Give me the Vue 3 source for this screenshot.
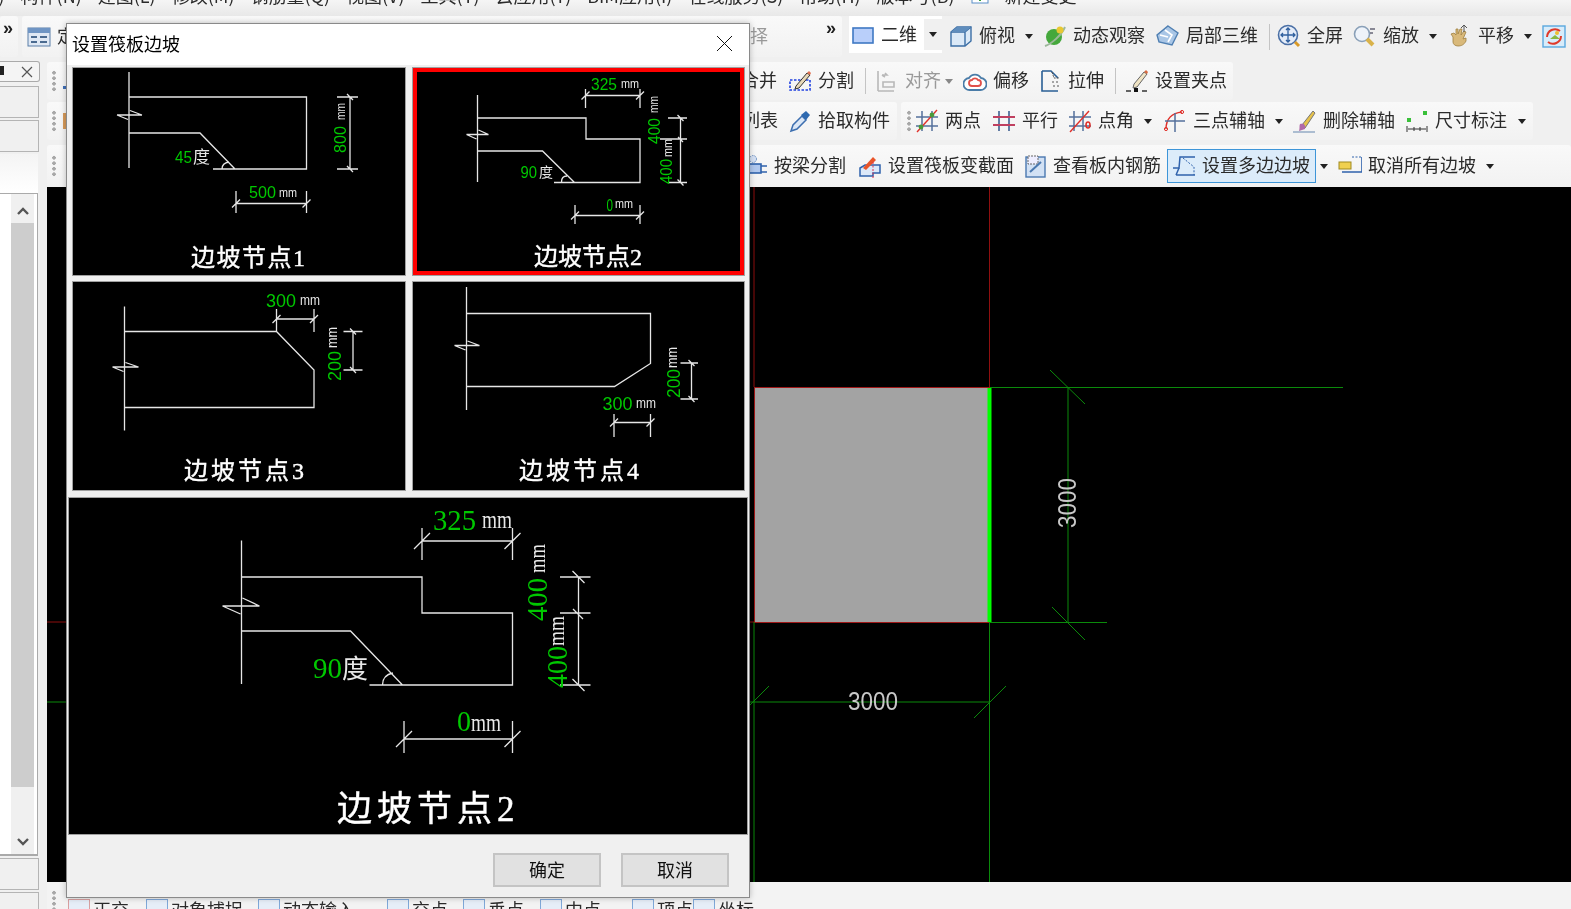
<template>
  <div class="app">
    <div class="menu">
      <div class="menu-inner">
        <span v-for="m in menus" :key="m" class="menu-item">{{ m }}</span>
        <svg class="menu-icon" viewBox="0 0 18 18" width="18" height="18">
          <rect x="1" y="1" width="16" height="15" fill="#fff" stroke="#5a8fc8" />
          <path d="M9 4v6M5 9l4 5 4-5z" fill="#3ab53a" stroke="#2c9a2c" />
        </svg>
        <span class="menu-item">新建变更</span>
      </div>
    </div>

    <div class="row row-top">
      <div class="panel panel-more"><span class="more">»</span></div>
      <div class="panel panel-select">
        <template v-for="t in topLeft" :key="t.id">
          <span v-if="t.more" class="more" :style="{ marginLeft: t.ml + 'px' }">»</span>
          <div v-else class="tool" :class="{ ghost: t.ghost }" :style="{ marginLeft: t.ml + 'px' }">
            <svg v-if="t.icon" class="icon" viewBox="0 0 24 24" v-html="icons[t.icon]"></svg>
            <span v-if="t.label">{{ t.label }}</span>
          </div>
        </template>
      </div>
      <div class="view-group">
        <div class="tool">
          <svg class="icon" viewBox="0 0 24 24" v-html="icons.plane"></svg>
          <span>二维</span>
        </div>
        <div class="view-caret"><i class="caret"></i></div>
      </div>
      <template v-for="t in topRight" :key="t.id">
        <i v-if="t.sep" class="sep" :style="{ marginLeft: t.ml + 'px' }"></i>
        <i v-else-if="t.caret" class="caret" :style="{ marginLeft: t.ml + 'px' }"></i>
        <div v-else class="tool" :style="{ marginLeft: t.ml + 'px' }">
          <svg class="icon" viewBox="0 0 24 24" v-html="icons[t.icon]"></svg>
          <span v-if="t.label">{{ t.label }}</span>
        </div>
      </template>
    </div>

    <div class="work">
      <aside class="side">
        <div class="side-tab">
          <span class="pin"></span>
          <svg viewBox="0 0 12 12" width="12" height="12"><path d="M1 1l10 10M11 1L1 11" stroke="#555" stroke-width="1.2" /></svg>
        </div>
        <div class="side-row"></div>
        <div class="side-row"></div>
        <div class="side-blank"></div>
        <div class="side-list">
          <div class="scrollbar">
            <svg viewBox="0 0 14 10" width="14" height="10"><path d="M2 8l5-5 5 5" fill="none" stroke="#555" stroke-width="2.4" /></svg>
            <div class="thumb"></div>
            <svg viewBox="0 0 14 10" width="14" height="10"><path d="M2 2l5 5 5-5" fill="none" stroke="#555" stroke-width="2.4" /></svg>
          </div>
        </div>
        <div class="side-row side-row-low"></div>
        <div class="side-row side-row-low"></div>
      </aside>

      <main class="main">
        <div v-for="r in rows" :key="r.id" class="row" :class="r.cls">
          <div v-for="p in r.panels" :key="p.id" class="panel" :class="p.cls">
            <span class="grip"></span>
            <template v-for="t in p.items" :key="t.id">
              <i v-if="t.sep" class="sep" :style="{ marginLeft: t.ml + 'px' }"></i>
              <i v-else-if="t.caret" class="caret" :class="{ small: t.small }" :style="{ marginLeft: t.ml + 'px' }"></i>
              <div v-else class="tool" :class="{ ghost: t.ghost, active: t.active }" :style="{ marginLeft: t.ml + 'px' }">
                <svg class="icon" viewBox="0 0 24 24" v-html="icons[t.icon]"></svg>
                <span>{{ t.label }}</span>
              </div>
            </template>
          </div>
        </div>

        <svg class="canvas" viewBox="47 187 1524 695">
          <rect x="754.5" y="387.5" width="235" height="235" fill="#a3a3a3" stroke="#a01818" />
          <path d="M754 187V387M989.5 187V387M47 622H754" stroke="#8f0f0f" fill="none" />
          <path d="M990 387.5H1343M990 622.5H1107M1068 387.5V622.5M1050 370L1085 404M1052 607L1085 640M989.5 622V882M754 622V882M47 702H989.5M769 686L750 705M1006 686L974 718" stroke="#0b8a0b" fill="none" />
          <path d="M989.5 388V622" stroke="#00ff00" stroke-width="4" />
          <text class="dim" x="848" y="710" font-size="25" textLength="50" lengthAdjust="spacingAndGlyphs">3000</text>
          <text class="dim" x="1076" y="528" font-size="25" textLength="50" lengthAdjust="spacingAndGlyphs" transform="rotate(-90 1076 528)">3000</text>
        </svg>

        <div class="status">
          <span class="grip grip-status"></span>
          <div v-for="s in statusItems" :key="s.label" class="status-item" :class="s.cls">
            <i class="status-icon"></i>
            <span>{{ s.label }}</span>
          </div>
        </div>
      </main>
    </div>

    <div class="dialog">
      <div class="dialog-title">
        <span>设置筏板边坡</span>
        <svg viewBox="0 0 15 15" width="15" height="15"><path d="M0 0l15 15M15 0L0 15" stroke="#111" stroke-width="1" /></svg>
      </div>
      <div class="node-grid">
        <div v-for="n in nodes" :key="n.id" class="node" :class="{ selected: n.selected }">
          <svg :viewBox="n.view">
            <path :d="n.d" class="drawing" />
            <text
              v-for="(t, i) in n.texts"
              :key="i"
              :class="t.c"
              :x="t.x"
              :y="t.y"
              :font-size="t.s"
              :textLength="t.len"
              :lengthAdjust="t.len ? 'spacingAndGlyphs' : undefined"
              :transform="t.rot ? `rotate(-90 ${t.x} ${t.y})` : undefined"
            >{{ t.v }}</text>
          </svg>
        </div>
      </div>
      <div class="preview">
        <svg :viewBox="preview.view">
          <path :d="preview.d" class="drawing" />
          <text
            v-for="(t, i) in preview.texts"
            :key="i"
            :class="[t.c, 'serif']"
            :x="t.x"
            :y="t.y"
            :font-size="t.s"
            :textLength="t.len"
            :lengthAdjust="t.len ? 'spacingAndGlyphs' : undefined"
            :transform="t.rot ? `rotate(-90 ${t.x} ${t.y})` : undefined"
          >{{ t.v }}</text>
        </svg>
      </div>
      <div class="dialog-foot">
        <button class="btn">确定</button>
        <button class="btn">取消</button>
      </div>
    </div>
  </div>
</template>

<script setup>
const menus = ['工程(P)', '构件(N)', '建图(L)', '修改(M)', '钢筋量(Q)', '视图(V)', '工具(T)', '云应用(Y)', 'BIM应用(I)', '在线服务(S)', '帮助(H)', '版本号(B)']

const icons = {
  form: '<rect x="1" y="3" width="22" height="18" fill="#dfe8f4" stroke="#5a7fa8"/><rect x="1" y="3" width="22" height="5" fill="#6f95c4"/><path d="M4 12h6M13 12h7M4 17h6M13 17h7" stroke="#4a6a90" stroke-width="2"/>',
  plane: '<rect x="2" y="5" width="20" height="15" fill="#b9cffa" stroke="#3f78c4" stroke-width="1.6"/>',
  cube: '<path d="M2 8l6-5h14v14l-6 5H2z" fill="#dbe9f7" stroke="#3b6ea5" stroke-width="1.4"/><path d="M2 8h14v14M16 8l6-5" fill="none" stroke="#3b6ea5" stroke-width="1.4"/><path d="M2 8l6-5h14l-6 5z" fill="#5f8dbd"/>',
  orbit: '<ellipse cx="11" cy="13" rx="8" ry="8" fill="#45a83c"/><path d="M2 22C8 20 18 12 22 3" stroke="#9cb89a" stroke-width="2" fill="none"/><circle cx="17" cy="6" r="3.5" fill="#e8c832"/>',
  local3d: '<path d="M12 2l10 7-6 12-13-3-2-7z" fill="#a9c6e6" stroke="#4f7fb2" stroke-width="1.4"/><path d="M9 6l7 5-4 7M4 11l8 2" stroke="#fff" stroke-width="1.6" fill="none"/>',
  fit: '<circle cx="11" cy="11" r="9.5" fill="#e4ecf8" stroke="#4a6fa5" stroke-width="1.6"/><path d="M11 4v14M4 11h14M9 6l2-2 2 2M9 16l2 2 2-2M6 9l-2 2 2 2M16 9l2 2-2 2" stroke="#2f5f9e" stroke-width="1.3" fill="none"/><path d="M18 18l4 4" stroke="#d99a28" stroke-width="3"/>',
  zoom: '<circle cx="9" cy="10" r="7.5" fill="#eef3fa" stroke="#8aa0b8" stroke-width="1.6"/><path d="M14 15l6 6" stroke="#d9b24a" stroke-width="4"/><path d="M17 5h5M17 9h3" stroke="#667" stroke-width="1.4"/>',
  pan: '<path d="M5 13l-2-3 3-1 2 2V5h2v5l2-5h2l-1 6 3-4 2 1-3 7 3-1v3c-2 4-5 5-8 5s-5-2-5-4z" fill="#d9b97a" stroke="#a08040" stroke-width=".8"/><path d="M16 2v6M13 4l3-3 3 3" stroke="#555" fill="none"/>',
  cycle: '<rect x="1" y="2" width="22" height="21" fill="#d8ecfa" stroke="#5aa8de" stroke-width="1.4"/><path d="M5 13a8 8 0 0 1 13-6M19 12a8 8 0 0 1-13 6" stroke="#e03a2a" stroke-width="2" fill="none"/><path d="M8 15l5-4 5 4z" fill="#8ab840"/><circle cx="15" cy="9" r="2" fill="#eec030"/>',
  split: '<rect x="2" y="11" width="20" height="10" fill="none" stroke="#2040e0" stroke-width="1.6" stroke-dasharray="2.5 1.5"/><path d="M8 17L19 4l3 2-11 13-4 1z" fill="#e8d8b8" stroke="#333"/><path d="M19 4l3 2 1-2-2-2z" fill="#e07050"/>',
  align: '<path d="M3 2v20M3 22h16M7 6h5l-2-2M7 6l3 2M8 13h11v5H8z" stroke="#b8b8b8" stroke-width="1.6" fill="none"/>',
  offset: '<path d="M7 21a6 6 0 0 1-1-12 7 7 0 0 1 12 0 6 6 0 0 1-1 12z" fill="#fff" stroke="#4a7ca8" stroke-width="1.8"/><path d="M9 17a3 3 0 0 1 0-6 3.5 3.5 0 0 1 6 0 3 3 0 0 1 0 6z" fill="none" stroke="#e0504a" stroke-width="1.8"/>',
  stretch: '<path d="M4 2h9l7 7v0M4 2v20h16" fill="none" stroke="#2a5f95" stroke-width="1.6"/><path d="M14 3l2 6h5M14 13h2M18 13h2M15 17h2M19 17h2" stroke="#555" stroke-dasharray="2 1" fill="none"/>',
  gripEdit: '<path d="M9 15L19 3l3 2-10 13-4 1z" fill="#f0e4c4" stroke="#666"/><path d="M19 3l3 2 1-2-2-2z" fill="#d86a40"/><path d="M1 22h5M17 22h5" stroke="#333" stroke-width="1.5"/><rect x="9" y="19" width="4" height="4" fill="#111"/>',
  pick: '<path d="M3 22l2-6 9-9 4 4-9 9z" fill="#dbe7f6" stroke="#3d6fb0" stroke-width="1.5"/><path d="M13 6l5-4 4 4-4 5z" fill="#2f6ab0"/>',
  twoPoint: '<path d="M7 2v20M17 2v20M1 8h22M1 17h22" stroke="#54709c" stroke-width="1.5"/><path d="M2 23L22 1" stroke="#e0302a" stroke-width="1.4"/><circle cx="6" cy="18" r="2.4" fill="#4a9a3a"/><circle cx="17" cy="6" r="2.4" fill="#4a9a3a"/>',
  parallel: '<path d="M7 2v20M17 2v20" stroke="#54709c" stroke-width="1.8"/><path d="M1 8h22M1 16h22" stroke="#c04060" stroke-width="1.8"/>',
  angle: '<path d="M6 2v20M15 2v20M1 8h22M1 17h22" stroke="#54709c" stroke-width="1.5"/><path d="M2 23L21 2" stroke="#e0302a" stroke-width="1.4"/><ellipse cx="20" cy="16" rx="2" ry="3" fill="none" stroke="#e0302a" stroke-width="1.6"/>',
  threePoint: '<path d="M3 20C3 10 9 4 19 3" stroke="#e0302a" stroke-width="1.5" fill="none"/><path d="M12 4v19M2 12h20" stroke="#54709c" stroke-width="1.5"/><circle cx="3" cy="20" r="1.6" fill="none" stroke="#e0302a"/><circle cx="19" cy="3" r="1.6" fill="none" stroke="#e0302a"/>',
  erase: '<path d="M9 16L20 2l2 2-10 15z" fill="#e6c24a" stroke="#777"/><path d="M7 15c4-1 6 1 5 5l-6 2c1-3 0-5 1-7z" fill="#b06aa8"/><path d="M0 23h22" stroke="#9ab0c8" stroke-width="1.6"/>',
  dimension: '<rect x="2" y="9" width="4" height="4" fill="#3ac03a"/><rect x="18" y="2" width="4" height="4" fill="#3ac03a"/><path d="M2 17v6M22 17v6M3 20h18M9 18v4M15 18v4" stroke="#333" fill="none"/>',
  beam: '<rect x="2" y="10" width="15" height="9" fill="#b0c8ee" stroke="#2f62ac" stroke-width="1.6"/><path d="M17 12h6M17 18h6" stroke="#2f62ac" stroke-width="1.6"/><circle cx="9" cy="5" r="3.5" fill="#d6e2f5" stroke="#6a8fc0" stroke-dasharray="1.5 1"/>',
  section: '<path d="M2 22V14l5-3h15v8h-7v3z" fill="#dce8f8" stroke="#2f62ac" stroke-width="1.5"/><path d="M5 14L15 3l3 3L8 16z" fill="#e9552a"/><path d="M15 8v16" stroke="#e0304a" stroke-dasharray="2 1.5"/>',
  rebar: '<rect x="3" y="3" width="19" height="20" fill="#d2e1f4" stroke="#4a78b0" stroke-width="1.4"/><path d="M5 2h10v8H5z" fill="#eef" stroke="#666" stroke-dasharray="2 1"/><path d="M7 18L18 8" stroke="#4a78b0" stroke-width="2"/>',
  poly: '<path d="M1 14h6l1-11h15" fill="none" stroke="#2f62ac" stroke-width="1.5"/><path d="M4 21h19M7 14l-3 7" fill="none" stroke="#2f62ac" stroke-width="1.5"/><path d="M11 4l11 9v8" fill="none" stroke="#2f62ac" stroke-dasharray="2 1.5"/>',
  cancel: '<rect x="1" y="8" width="12" height="7" fill="#f0d050" stroke="#a08a20"/><path d="M4 18h20V3" fill="none" stroke="#2f62ac" stroke-width="1.6"/><path d="M14 3h9" stroke="#2f62ac" stroke-dasharray="2 1.5"/>',
  dot: '<rect x="1" y="17" width="4" height="3" fill="#3f6fb8"/>',
  orange: '<rect x="1" y="4" width="4" height="16" fill="#d69a5a"/>',
  blank: ''
}

const topLeft = [
  { id: 1, icon: 'form', label: '定义', ml: 0 },
  { id: 2, label: '选择', ghost: true, ml: 639 },
  { id: 3, more: true, ml: 58 }
]

const topRight = [
  { id: 1, icon: 'cube', label: '俯视', ml: 7 },
  { id: 2, caret: true, ml: 10 },
  { id: 3, icon: 'orbit', label: '动态观察', ml: 10 },
  { id: 4, icon: 'local3d', label: '局部三维', ml: 11 },
  { id: 5, sep: true, ml: 11 },
  { id: 6, icon: 'fit', label: '全屏', ml: 7 },
  { id: 7, icon: 'zoom', label: '缩放', ml: 10 },
  { id: 8, caret: true, ml: 10 },
  { id: 9, icon: 'pan', label: '平移', ml: 11 },
  { id: 10, caret: true, ml: 10 },
  { id: 11, icon: 'cycle', ml: 10 }
]

const rows = [
  {
    id: 'edit',
    cls: 'row-mid',
    panels: [{
      id: 1,
      cls: 'panel-a',
      items: [
        { id: 1, icon: 'dot', label: '选择', ml: 6 },
        { id: 2, icon: 'split', label: '合并', ml: 583 },
        { id: 3, icon: 'split', label: '分割', ml: 11 },
        { id: 4, sep: true, ml: 11 },
        { id: 5, icon: 'align', label: '对齐', ghost: true, ml: 9 },
        { id: 6, caret: true, small: true, ml: 4 },
        { id: 7, icon: 'offset', label: '偏移', ml: 10 },
        { id: 8, icon: 'stretch', label: '拉伸', ml: 9 },
        { id: 9, sep: true, ml: 11 },
        { id: 10, icon: 'gripEdit', label: '设置夹点', ml: 9 }
      ]
    }]
  },
  {
    id: 'axis',
    cls: 'row-mid',
    panels: [
      {
        id: 1,
        cls: 'panel-b',
        items: [
          { id: 1, icon: 'orange', label: '构件', ml: 6 },
          { id: 2, icon: 'form', label: '列表', ml: 584 },
          { id: 3, icon: 'pick', label: '拾取构件', ml: 10 }
        ]
      },
      {
        id: 2,
        cls: 'panel-c',
        items: [
          { id: 1, icon: 'twoPoint', label: '两点', ml: 4 },
          { id: 2, icon: 'parallel', label: '平行', ml: 11 },
          { id: 3, icon: 'angle', label: '点角', ml: 10 },
          { id: 4, caret: true, ml: 10 },
          { id: 5, icon: 'threePoint', label: '三点辅轴', ml: 11 },
          { id: 6, caret: true, ml: 10 },
          { id: 7, icon: 'erase', label: '删除辅轴', ml: 10 },
          { id: 8, icon: 'dimension', label: '尺寸标注', ml: 10 },
          { id: 9, caret: true, ml: 11 }
        ]
      }
    ]
  },
  {
    id: 'slab',
    cls: 'row-low',
    panels: [{
      id: 1,
      cls: 'panel-d',
      items: [
        { id: 1, icon: 'blank', label: '筏板', ml: 6 },
        { id: 2, icon: 'beam', label: '按梁分割', ml: 616 },
        { id: 3, icon: 'section', label: '设置筏板变截面', ml: 12 },
        { id: 4, icon: 'rebar', label: '查看板内钢筋', ml: 9 },
        { id: 5, icon: 'poly', label: '设置多边边坡', active: true, ml: 6 },
        { id: 6, caret: true, ml: 4 },
        { id: 7, icon: 'cancel', label: '取消所有边坡', ml: 10 },
        { id: 8, caret: true, ml: 10 }
      ]
    }]
  }
]

const statusItems = [
  { label: '正交', cls: 'st-ortho' },
  { label: '对象捕捉', cls: 'st-snap' },
  { label: '动态输入', cls: 'st-input' },
  { label: '交点', cls: 'st-cross' },
  { label: '垂点', cls: 'st-foot' },
  { label: '中点', cls: 'st-mid' },
  { label: '顶点', cls: 'st-top' },
  { label: '坐标', cls: 'st-coord' }
]

// dimension helpers, all numbers are screen px because each svg viewBox starts at its cell corner
function dimH(x1, x2, y, y1, y2, t = 4) {
  return `M${x1} ${y1}V${y2}M${x2} ${y1}V${y2}M${x1} ${y}H${x2}M${x1 - t} ${y + t}L${x1 + t} ${y - t}M${x2 - t} ${y + t}L${x2 + t} ${y - t}`
}

function dimV(y1, y2, x, x1, x2, t = 3) {
  return `M${x1} ${y1}H${x2}M${x1} ${y2}H${x2}M${x} ${y1}V${y2}M${x - t} ${y1 - t}L${x + t} ${y1 + t}M${x - t} ${y2 - t}L${x + t} ${y2 + t}`
}

function breakMark(x, y, l, r, h = 4.5) {
  return `M${x - l} ${y}H${x + r}M${x - l} ${y}L${x - 1} ${y + h}M${x + 1} ${y - h}L${x + r} ${y}`
}

const num = (v, x, y, len, rot = false, s = 17) => ({ v, x, y, len, rot, s, c: 'num' })
const unit = (v, x, y, len, rot = false, s = 12) => ({ v, x, y, len, rot, s, c: 'unit' })
const word = (v, x, y, s) => ({ v, x, y, s, c: 'word' })

const nodes = [
  {
    id: 1,
    view: '73 68 332 207',
    d: 'M129 72V168M129 97H306.5V169H213M129 133H200L235 169M222 169Q222 163 229 162' +
      breakMark(129, 115, 12, 13) + dimV(97, 169, 350, 337, 358) + dimH(236, 306.5, 203.5, 191, 213),
    texts: [
      num('45', 175, 163, 17), word('度', 193, 163, 17),
      num('500', 249, 198, 27), unit('mm', 279, 197, 18, false, 13),
      num('800', 346, 153, 27, true), unit('mm', 345, 120, 17, true),
      { v: '边坡节点1', x: 191, y: 266, s: 24, c: 'caption spaced' }
    ]
  },
  {
    id: 2,
    selected: true,
    view: '413 68 331 207',
    d: 'M477.5 95V182M478 118H586V139H640V182.5H554M478 151H542.5L574.5 182.5M561.5 182Q561.5 176 567 176' +
      breakMark(477.5, 134.5, 11, 11) + dimH(585.5, 640, 95.5, 89, 108) + dimV(118, 182.5, 680.5, 668, 687) +
      'M660 139H687M678 137L683 142' + dimH(575, 640, 215.5, 205, 224),
    texts: [
      num('90', 520.5, 178, 16.5), word('度', 539, 177, 14),
      num('325', 591, 90, 26), unit('mm', 621, 88, 18),
      num('400', 660, 144, 26, true), unit('mm', 658, 113, 17, true),
      num('400', 672, 184, 25, true), unit('mm', 672, 157, 18, true, 13),
      num('0', 606.5, 211, 6.5), unit('mm', 615, 208, 18),
      { v: '边坡节点2', x: 534, y: 265, s: 24, c: 'caption' }
    ]
  },
  {
    id: 3,
    view: '73 282 332 208',
    d: 'M124.5 306.5V430.5M125 331.5H276.5L314 370V407.5H125' +
      breakMark(124.5, 367, 12, 14) + dimH(276.5, 314, 319, 309, 332) + dimV(331.5, 370, 353, 343.5, 362.5),
    texts: [
      num('300', 266, 307, 30, false, 18), unit('mm', 300, 305, 20, false, 14),
      num('200', 341, 381, 30, true, 18), unit('mm', 337, 348, 21, true, 14),
      { v: '边坡节点3', x: 184, y: 479, s: 24, c: 'caption wide' }
    ]
  },
  {
    id: 4,
    view: '413 282 331 208',
    d: 'M466.5 287V410M467 313.5H650.5V363.5L614.5 386.5H467' +
      breakMark(466.5, 345.5, 12, 13) + dimH(614, 650.5, 422.5, 414, 437) + dimV(363, 399, 691.5, 680.5, 698),
    texts: [
      num('300', 602.5, 410, 30, false, 18), unit('mm', 636, 408, 20, false, 14),
      num('200', 680, 398, 29, true, 18), unit('mm', 677, 368, 21, true, 14),
      { v: '边坡节点4', x: 519, y: 479, s: 24, c: 'caption wide' }
    ]
  }
]

const preview = {
  view: '69 498 678 336',
  d: 'M241.5 540.5V684M242 577H422V613H512.5V685H369.5M242 631H350.5L402.5 685M382.5 685Q382.5 675 393 673' +
    breakMark(241.5, 606, 19, 18, 8) + dimH(422, 512.5, 541, 528, 560, 8) + dimV(577, 685, 578.5, 560, 590.5, 6) +
    'M560 613H590.5M573 609L583 619' + dimH(404, 512.5, 739, 721, 753, 8),
  texts: [
    num('325', 433, 530, 43, false, 29), unit('mm', 482, 528, 30, false, 25),
    num('400', 547, 621, 43, true, 30), unit('mm', 545, 573, 29, true, 24),
    num('400', 567, 688, 42, true, 30), unit('mm', 564, 646, 30, true, 24),
    num('90', 313, 678, 29, false, 30), word('度', 342, 678, 26),
    num('0', 457, 731, 14, false, 30), unit('mm', 471, 731, 30, false, 25),
    { v: '边坡节点2', x: 337, y: 821, s: 35, c: 'caption large' }
  ]
}
</script>

<style>
html, body { margin: 0; overflow: hidden; background: #f0f0f0; }
</style>

<style scoped>
.app {
  position: relative;
  width: 1571px;
  height: 909px;
  overflow: hidden;
  background: #f0f0f0;
  color: #2b2b2b;
  font: 18px/24px "Noto Sans CJK SC", "Liberation Sans", sans-serif;
  filter: blur(0.3px);
}

.menu {
  height: 16px;
  overflow: hidden;
  background: linear-gradient(#f5f5f5, #e8e8e8);
}
.menu-inner {
  display: flex;
  align-items: center;
  gap: 16px;
  margin: -17px 0 0 -55px;
  white-space: nowrap;
}
.menu-icon { flex: none; margin-top: 2px; }

.row {
  display: flex;
  align-items: center;
  white-space: nowrap;
}
.row-top { height: 45px; align-items: flex-start; background: #f0f0f0; }
.row-top > .tool, .row-top > .sep, .row-top > .caret { margin-top: 8px; }
.row-top > .caret { margin-top: 18px; }
.row-mid { height: 40px; }
.row-low { height: 46px; align-items: flex-end; }

.panel {
  display: flex;
  align-items: center;
  background: linear-gradient(#f9f9f9, #f2f2f2);
  border-radius: 3px;
}
.panel-more { width: 18px; height: 41px; margin-right: 4px; padding-left: 3px; box-sizing: border-box; }
.panel-select { width: 820px; height: 41px; padding-left: 5px; box-sizing: border-box; }
.panel-a { width: 1186px; height: 38px; padding-left: 5px; box-sizing: border-box; }
.panel-b { width: 850px; height: 38px; padding-left: 5px; box-sizing: border-box; }
.panel-c { width: 632px; height: 38px; margin-left: 4px; padding-left: 6px; box-sizing: border-box; }
.panel-d { width: 1524px; height: 42px; padding-left: 5px; box-sizing: border-box; }

.more {
  align-self: flex-start;
  margin-top: 3px;
  font: bold 18px/18px "Liberation Sans", sans-serif;
  color: #222;
}

.view-group {
  display: flex;
  align-items: center;
  width: 93px;
  height: 37px;
  margin-left: 7px;
  padding-left: 2px;
  box-sizing: border-box;
  background: #fff;
}
.view-caret {
  display: flex;
  align-items: center;
  justify-content: center;
  width: 18px;
  height: 31px;
  margin-left: 7px;
  background: #f0f0f0;
}

.tool {
  display: flex;
  flex: none;
  align-items: center;
  gap: 6px;
  height: 24px;
}
.tool span { margin-bottom: 4px; }
.tool.ghost { color: #999; }
.tool.active {
  height: 32px;
  padding: 0 5px 0 4px;
  border: 1px solid #3d95d8;
  background: #dcecfa;
}
.icon { flex: none; width: 24px; height: 24px; }

.caret {
  display: block;
  flex: none;
  width: 0;
  height: 0;
  border-top: 5px solid #222;
  border-left: 4px solid transparent;
  border-right: 4px solid transparent;
}
.caret.small { border-top-color: #888; }

.sep {
  display: block;
  flex: none;
  width: 1px;
  height: 26px;
  background: #c4c4c4;
}

.grip {
  flex: none;
  width: 4px;
  height: 22px;
  background: radial-gradient(circle, #a8a8a8 1.6px, transparent 2px) 0 0 / 4px 5.5px;
}

.work { display: flex; height: 848px; }

.side {
  flex: none;
  width: 47px;
  box-sizing: border-box;
  padding-top: 0;
}
.side-tab {
  display: flex;
  align-items: center;
  justify-content: flex-end;
  gap: 0;
  width: 40px;
  height: 21px;
  box-sizing: border-box;
  padding-right: 6px;
  border: 1px solid #aaa;
  border-left: 0;
  border-radius: 0 3px 3px 0;
  background: #f4f4f4;
  position: relative;
}
.pin {
  position: absolute;
  left: 0;
  top: 4px;
  width: 4px;
  height: 9px;
  background: #222;
}
.side-row {
  width: 39px;
  height: 32px;
  margin-top: 2px;
  box-sizing: border-box;
  border: 1px solid #b4b4b4;
  border-left: 0;
  background: #f0f0f0;
}
.side-row:nth-child(2) { margin-top: 4px; }
.side-blank {
  width: 38px;
  height: 39px;
  margin-top: 2px;
  background: linear-gradient(#f4f4f4, #fff);
}
.side-list {
  display: flex;
  justify-content: flex-end;
  width: 38px;
  height: 663px;
  box-sizing: border-box;
  padding-right: 3px;
  border: 1px solid #aaa;
  border-width: 1px 1px 2px 0;
  background: #fff;
}
.scrollbar {
  display: flex;
  flex-direction: column;
  align-items: center;
  gap: 0;
  width: 23px;
  height: 100%;
  padding-top: 12px;
  box-sizing: border-box;
  background: #f0f0f0;
}
.thumb {
  width: 100%;
  height: 564px;
  margin: 7px 0 50px;
  background: #cdcdcd;
}
.side-row-low { margin-top: 2px; }

.main { flex: none; width: 1524px; }

.canvas {
  display: block;
  width: 1524px;
  height: 695px;
  background: #000;
}
.dim {
  fill: #c8c8c8;
  font-family: "Liberation Sans", sans-serif;
}

.status {
  display: flex;
  align-items: flex-start;
  height: 27px;
  overflow: hidden;
  background: #f3f3f3;
}
.grip-status { margin: 8px 0 0 5px; }
.status-item {
  display: flex;
  flex: none;
  align-items: center;
  gap: 3px;
  margin-top: 15px;
  height: 24px;
}
.status-icon {
  display: block;
  width: 22px;
  height: 20px;
  box-sizing: border-box;
  border: 1px solid #7fa8d8;
  background: #e6eef8;
}
.st-ortho { margin-left: 12px; }
.st-ortho .status-icon { border-color: #d8a0a0; }
.st-snap { margin-left: 17px; }
.st-input { margin-left: 15px; }
.st-cross { margin-left: 32px; }
.st-foot { margin-left: 15px; }
.st-mid { margin-left: 16px; }
.st-top { margin-left: 31px; }
.st-coord { margin-left: 0; }

.dialog {
  position: absolute;
  left: 66px;
  top: 23px;
  width: 684px;
  height: 875px;
  box-sizing: border-box;
  border: 1px solid #8a8a8a;
  background: #f0f0f0;
  box-shadow: 0 0 6px rgba(0, 0, 0, 0.25);
  color: #000;
}
.dialog-title {
  display: flex;
  align-items: center;
  justify-content: space-between;
  height: 41px;
  padding: 0 17px 3px 5px;
  box-sizing: border-box;
  background: #fff;
}
.node-grid {
  display: grid;
  grid-template-columns: 334px 333px;
  grid-template-rows: 209px 210px;
  gap: 5px 6px;
  margin: 2px 0 0 5px;
}
.node {
  position: relative;
  box-sizing: border-box;
  border: 1px solid #a0a0a0;
  background: #000;
}
.node svg, .preview svg {
  display: block;
  width: 100%;
  height: 100%;
}
.node.selected::after {
  content: "";
  position: absolute;
  inset: 0;
  border: 4px solid #ff0000;
}
.preview {
  width: 680px;
  height: 338px;
  margin: 6px 0 0 1px;
  box-sizing: border-box;
  border: 1px solid #a0a0a0;
  background: #000;
}
.drawing {
  fill: none;
  stroke: #e6e6e6;
  stroke-width: 1.3;
}
.num {
  fill: #00c800;
  font-family: "Liberation Sans", sans-serif;
}
.unit {
  fill: #e8e8e8;
  font-family: "Liberation Sans", sans-serif;
}
.word {
  fill: #e8e8e8;
  font-family: "Noto Sans CJK SC", sans-serif;
}
.caption {
  fill: #fff;
  stroke: #fff;
  stroke-width: 0.4;
  font-family: "Liberation Serif", "Noto Sans CJK SC", serif;
}
.caption.spaced { letter-spacing: 1.5px; }
.caption.wide { letter-spacing: 3px; }
.caption.large { letter-spacing: 5px; }
.serif.num, .serif.unit { font-family: "Liberation Serif", serif; }

.dialog-foot {
  display: flex;
  justify-content: flex-end;
  gap: 20px;
  padding: 18px 20px 0 0;
}
.btn {
  width: 108px;
  height: 34px;
  padding: 0 0 3px;
  border: 2px solid #c4c4c4;
  background: #e1e1e1;
  color: #111;
  font: 18px/24px "Noto Sans CJK SC", sans-serif;
}
</style>
